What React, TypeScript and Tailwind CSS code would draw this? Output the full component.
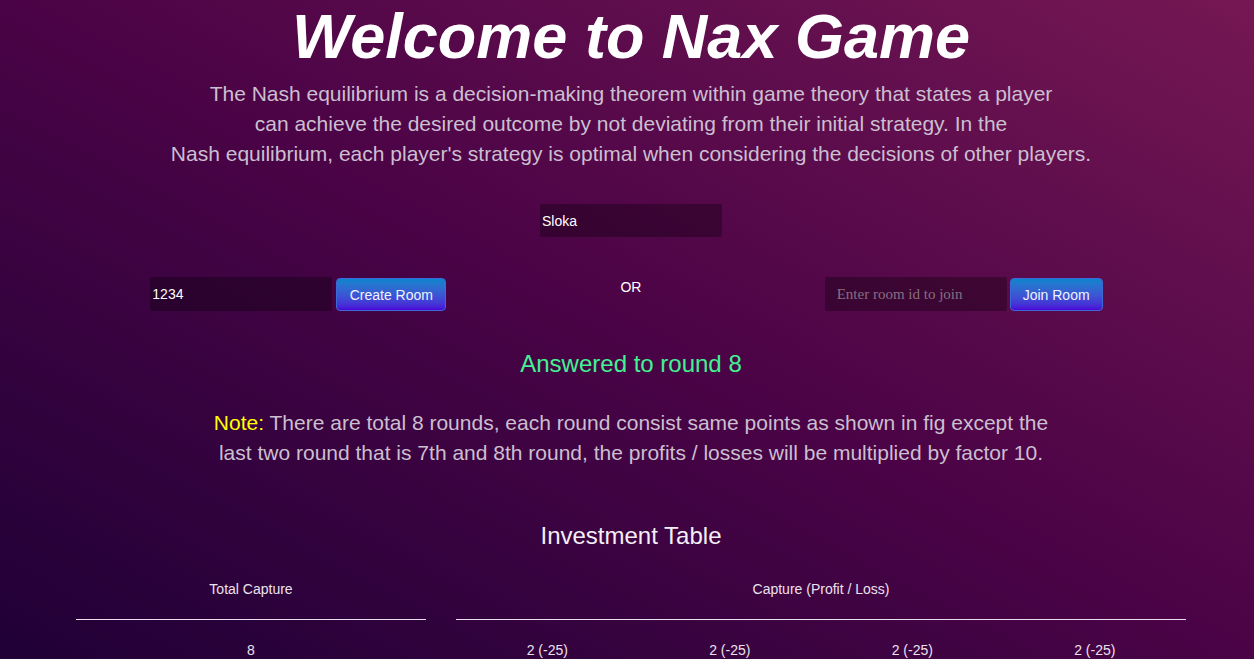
import React from "react";

const rows = ["2 (-25)", "2 (-25)", "2 (-25)", "2 (-25)"];

export default function App() {
    return (
        <div
            className="min-h-[659px] w-full overflow-hidden bg-gradient-to-tr from-[#200036] via-[#4a0346] to-[#751753] pl-[8px] text-center text-white"
            style={{ fontFamily: '"Liberation Sans", Arial, sans-serif' }}
        >
            {/* Heading */}
            <h1 className="text-[63px] font-bold italic leading-[72px]">Welcome to Nax Game</h1>
            <p className="mt-[7px] text-[21px] leading-[30px] text-[#cbbfd0]">
                The Nash equilibrium is a decision-making theorem within game theory that states a player
                <br />
                can achieve the desired outcome by not deviating from their initial strategy. In the
                <br />
                Nash equilibrium, each player&apos;s strategy is optimal when considering the decisions of other players.
            </p>

            {/* Name */}
            <div className="mt-[35px] flex justify-center">
                <input
                    defaultValue="Sloka"
                    className="h-[33px] w-[182px] rounded-[2px] bg-black/30 pl-[2px] text-[14px] text-white outline-none"
                />
            </div>

            {/* Create / join */}
            <div className="mx-auto mt-[40px] grid w-[998px] grid-cols-3 items-start">
                <div className="flex items-start justify-center gap-[4px]">
                    <input
                        defaultValue="1234"
                        className="h-[34px] w-[182px] rounded-[2px] bg-black/30 pl-[2px] text-[14px] text-white outline-none"
                    />
                    <button className="mt-px h-[33px] w-[110px] rounded-[4px] border border-[#3b6ad8] bg-gradient-to-b from-[#0784cc] to-[#4a00d8] pt-px text-[14px] text-[#eef3ff]">
                        Create Room
                    </button>
                </div>
                <span className="text-[14px] leading-[20px]">OR</span>
                <div className="flex items-start justify-center gap-[3px]">
                    <input
                        placeholder="Enter room id to join"
                        className="h-[34px] w-[182px] rounded-[2px] bg-black/30 px-3 text-[15px] text-white outline-none placeholder:text-[#85707f]"
                        style={{ fontFamily: '"Liberation Serif", "Times New Roman", serif' }}
                    />
                    <button className="mt-px h-[33px] w-[93px] rounded-[4px] border border-[#3b6ad8] bg-gradient-to-b from-[#0784cc] to-[#4a00d8] pt-px text-[14px] text-[#eef3ff]">
                        Join Room
                    </button>
                </div>
            </div>

            <div className="mt-[39px] text-[24px] leading-[28px] text-[#42f292]">Answered to round 8</div>

            <p className="mt-[30px] text-[21px] leading-[30px] text-[#cbbfd0]">
                <span className="text-[#ffff00]">Note:</span> There are total 8 rounds, each round consist same points as shown in fig except the
                <br />
                last two round that is 7th and 8th round, the profits / losses will be multiplied by factor 10.
            </p>

            <h2 className="mt-[54px] text-[24px] leading-[28px] text-[#f4eef8]">Investment Table</h2>

            {/* Table */}
            <div className="ml-[68px] mt-[29px] flex gap-[30px] text-[14px] leading-[20px] text-[#ece2ee]">
                <div className="w-[350px]">
                    <div className="border-b border-[#eadfee] pb-[20px]">Total Capture</div>
                    <div className="mt-[20px]">8</div>
                </div>
                <div className="w-[730px]">
                    <div className="border-b border-[#eadfee] pb-[20px]">Capture (Profit / Loss)</div>
                    <div className="mt-[20px] grid grid-cols-4">
                        {rows.map((r, i) => (
                            <div key={i}>{r}</div>
                        ))}
                    </div>
                </div>
            </div>
        </div>
    );
}
